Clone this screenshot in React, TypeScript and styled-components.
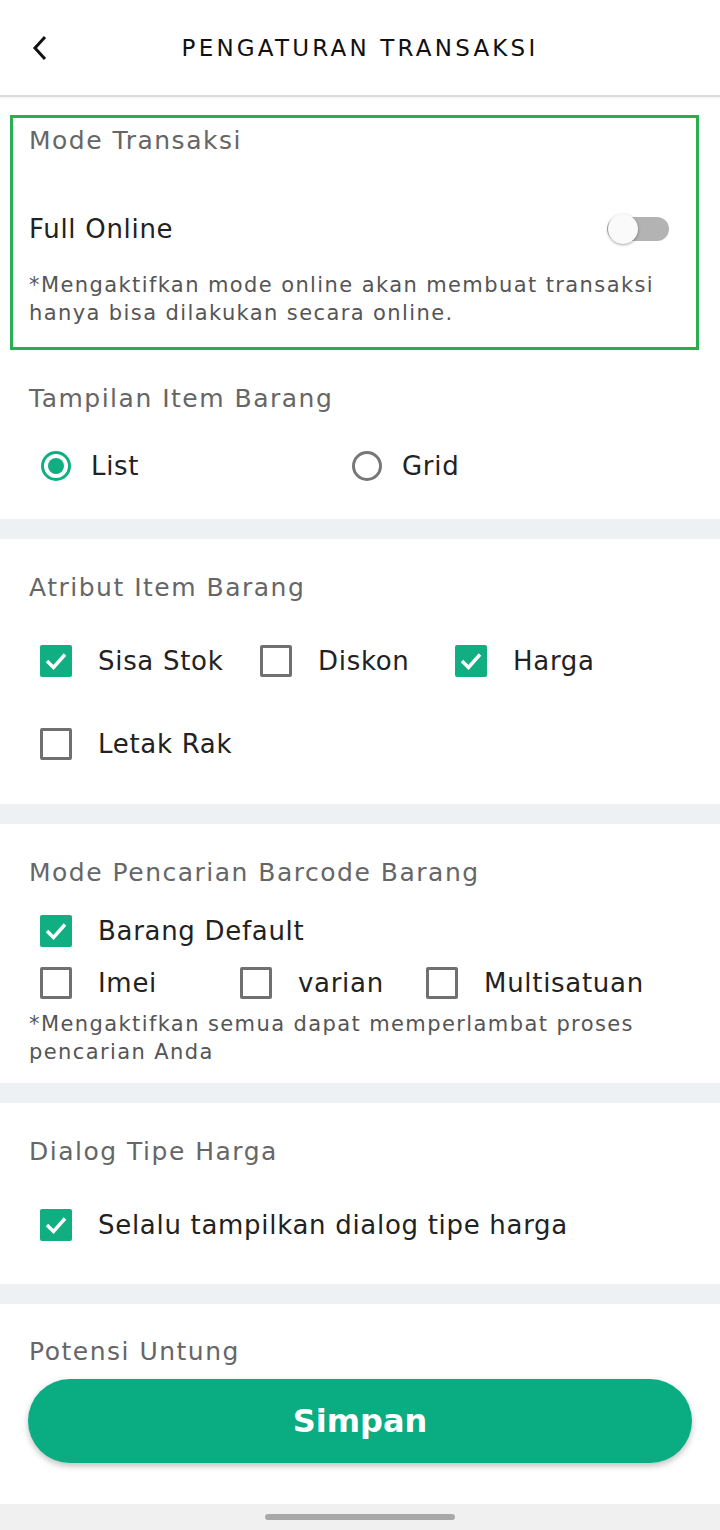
import React from "react";
import styled, { createGlobalStyle } from "styled-components";

const GlobalStyle = createGlobalStyle`
  html, body { margin: 0; padding: 0; background: #ffffff; }
  body { font-family: "DejaVu Sans", "Noto Sans", sans-serif; -webkit-font-smoothing: antialiased; }
  * { box-sizing: border-box; }
`;

const GREEN = "#10ae81";

const Page = styled.div`
  width: 720px;
  height: 1530px;
  display: flex;
  flex-direction: column;
  background: #ffffff;
  overflow: hidden;
`;

const Header = styled.header`
  height: 97px;
  flex-shrink: 0;
  display: grid;
  grid-template-columns: 80px 1fr 80px;
  align-items: center;
  border-bottom: 2px solid #dcdcdc;
  box-shadow: 0 1px 2px rgba(0, 0, 0, 0.06);
`;

const BackButton = styled.button`
  border: 0;
  background: none;
  padding: 0 0 0 30px;
  height: 40px;
  display: flex;
  align-items: center;
  cursor: pointer;
`;

const Title = styled.h1`
  margin: 0;
  text-align: center;
  font-size: 23px;
  font-weight: 400;
  color: #111;
  letter-spacing: 3.2px;
`;

const Highlight = styled.section`
  margin: 18px 21px 0 10px;
  border: 3px solid #27ae4f;
  padding: 7px 0 20px 16px;
  display: flex;
  flex-direction: column;
`;

const Section = styled.section<{ $top: number; $bottom: number }>`
  padding: ${(p) => p.$top}px 29px ${(p) => p.$bottom}px 29px;
  display: flex;
  flex-direction: column;
`;

const SectionTitle = styled.div`
  font-size: 25px;
  line-height: 32px;
  letter-spacing: 1.5px;
  color: #666;
`;

const ToggleRow = styled.div`
  margin-top: 52px;
  height: 40px;
  display: flex;
  align-items: center;
  justify-content: space-between;
  padding-right: 27px;
`;

const ItemLabel = styled.span`
  font-size: 26px;
  letter-spacing: 0.7px;
  color: #222;
  white-space: nowrap;
`;

const Track = styled.div`
  position: relative;
  width: 62px;
  height: 24px;
  border-radius: 12px;
  background: #b3b3b3;
`;

const Thumb = styled.div`
  position: absolute;
  left: 1px;
  top: -3px;
  width: 30px;
  height: 30px;
  border-radius: 50%;
  background: #fafafa;
  box-shadow: 0 1px 3px rgba(0, 0, 0, 0.35);
`;

const Note = styled.p<{ $top: number }>`
  margin: ${(p) => p.$top}px 0 0 0;
  padding-right: 20px;
  font-size: 21px;
  line-height: 28px;
  letter-spacing: 1.4px;
  color: #555;
`;

const RadioRow = styled.div`
  margin-top: 31px;
  height: 40px;
  display: grid;
  grid-template-columns: 311px 1fr;
  align-items: center;
`;

const Option = styled.label`
  display: flex;
  align-items: center;
`;

const RadioCircle = styled.span<{ $on?: boolean }>`
  width: 30px;
  height: 30px;
  margin-left: 12px;
  margin-right: 20px;
  border-radius: 50%;
  border: 3px solid ${(p) => (p.$on ? GREEN : "#777")};
  display: flex;
  align-items: center;
  justify-content: center;
  &::after {
    content: "";
    width: 16px;
    height: 16px;
    border-radius: 50%;
    background: ${(p) => (p.$on ? GREEN : "transparent")};
  }
`;

const CheckRow = styled.div<{ $top: number; $cols?: string }>`
  margin-top: ${(p) => p.$top}px;
  height: 40px;
  display: grid;
  grid-template-columns: ${(p) => p.$cols || "1fr"};
  align-items: center;
`;

const Box = styled.span<{ $on?: boolean }>`
  width: 32px;
  height: 32px;
  margin-left: 11px;
  margin-right: 26px;
  border-radius: 2px;
  flex-shrink: 0;
  border: ${(p) => (p.$on ? "none" : "3px solid #707070")};
  background: ${(p) => (p.$on ? GREEN : "transparent")};
  display: flex;
  align-items: center;
  justify-content: center;
`;

const Divider = styled.div`
  height: 20px;
  flex-shrink: 0;
  background: #eef1f4;
`;

const ButtonWrap = styled.div`
  padding: 11px 28px 0 28px;
  height: 137px;
`;

const SaveButton = styled.button`
  width: 100%;
  height: 84px;
  border: 0;
  border-radius: 42px;
  background: #0aad82;
  color: #fff;
  font-family: "DejaVu Sans", sans-serif;
  font-size: 32px;
  font-weight: 700;
  box-shadow: 0 3px 6px rgba(0, 0, 0, 0.25);
`;

const NavBar = styled.div`
  height: 26px;
  background: #f0f0f0;
  display: flex;
  align-items: center;
  justify-content: center;
  flex-shrink: 0;
`;

const Handle = styled.div`
  width: 190px;
  height: 6px;
  border-radius: 3px;
  background: #a8a8a8;
`;

const Check = ({ on, label }: { on?: boolean; label: string }) => (
  <Option>
    <Box $on={on}>
      {on && (
        <svg width="24" height="20" viewBox="0 0 24 20">
          <polyline points="3,10 9.5,16.5 21,3.5" fill="none" stroke="#fff" strokeWidth="3.4" />
        </svg>
      )}
    </Box>
    <ItemLabel>{label}</ItemLabel>
  </Option>
);

export default function App() {
  return (
    <Page>
      <GlobalStyle />
      <Header>
        <BackButton aria-label="back">
          <svg width="20" height="26" viewBox="0 0 20 26">
            <polyline points="15,2 5,13 15,24" fill="none" stroke="#111" strokeWidth="3" />
          </svg>
        </BackButton>
        <Title>PENGATURAN TRANSAKSI</Title>
        <span />
      </Header>

      <Highlight>
        <SectionTitle>Mode Transaksi</SectionTitle>
        <ToggleRow>
          <ItemLabel>Full Online</ItemLabel>
          <Track>
            <Thumb />
          </Track>
        </ToggleRow>
        <Note $top={22}>
          *Mengaktifkan mode online akan membuat transaksi hanya bisa dilakukan secara online.
        </Note>
      </Highlight>

      <Section $top={33} $bottom={33}>
        <SectionTitle>Tampilan Item Barang</SectionTitle>
        <RadioRow>
          <Option>
            <RadioCircle $on />
            <ItemLabel>List</ItemLabel>
          </Option>
          <Option>
            <RadioCircle />
            <ItemLabel>Grid</ItemLabel>
          </Option>
        </RadioRow>
      </Section>
      <Divider />

      <Section $top={33} $bottom={40}>
        <SectionTitle>Atribut Item Barang</SectionTitle>
        <CheckRow $top={37} $cols="220px 195px 1fr">
          <Check on label="Sisa Stok" />
          <Check label="Diskon" />
          <Check on label="Harga" />
        </CheckRow>
        <CheckRow $top={43}>
          <Check label="Letak Rak" />
        </CheckRow>
      </Section>
      <Divider />

      <Section $top={33} $bottom={17}>
        <SectionTitle>Mode Pencarian Barcode Barang</SectionTitle>
        <CheckRow $top={22}>
          <Check on label="Barang Default" />
        </CheckRow>
        <CheckRow $top={12} $cols="200px 186px 1fr">
          <Check label="Imei" />
          <Check label="varian" />
          <Check label="Multisatuan" />
        </CheckRow>
        <Note $top={7}>*Mengaktifkan semua dapat memperlambat proses pencarian Anda</Note>
      </Section>
      <Divider />

      <Section $top={33} $bottom={39}>
        <SectionTitle>Dialog Tipe Harga</SectionTitle>
        <CheckRow $top={37}>
          <Check on label="Selalu tampilkan dialog tipe harga" />
        </CheckRow>
      </Section>
      <Divider />

      <Section $top={32} $bottom={0}>
        <SectionTitle>Potensi Untung</SectionTitle>
      </Section>
      <ButtonWrap>
        <SaveButton>Simpan</SaveButton>
      </ButtonWrap>
      <NavBar>
        <Handle />
      </NavBar>
    </Page>
  );
}
